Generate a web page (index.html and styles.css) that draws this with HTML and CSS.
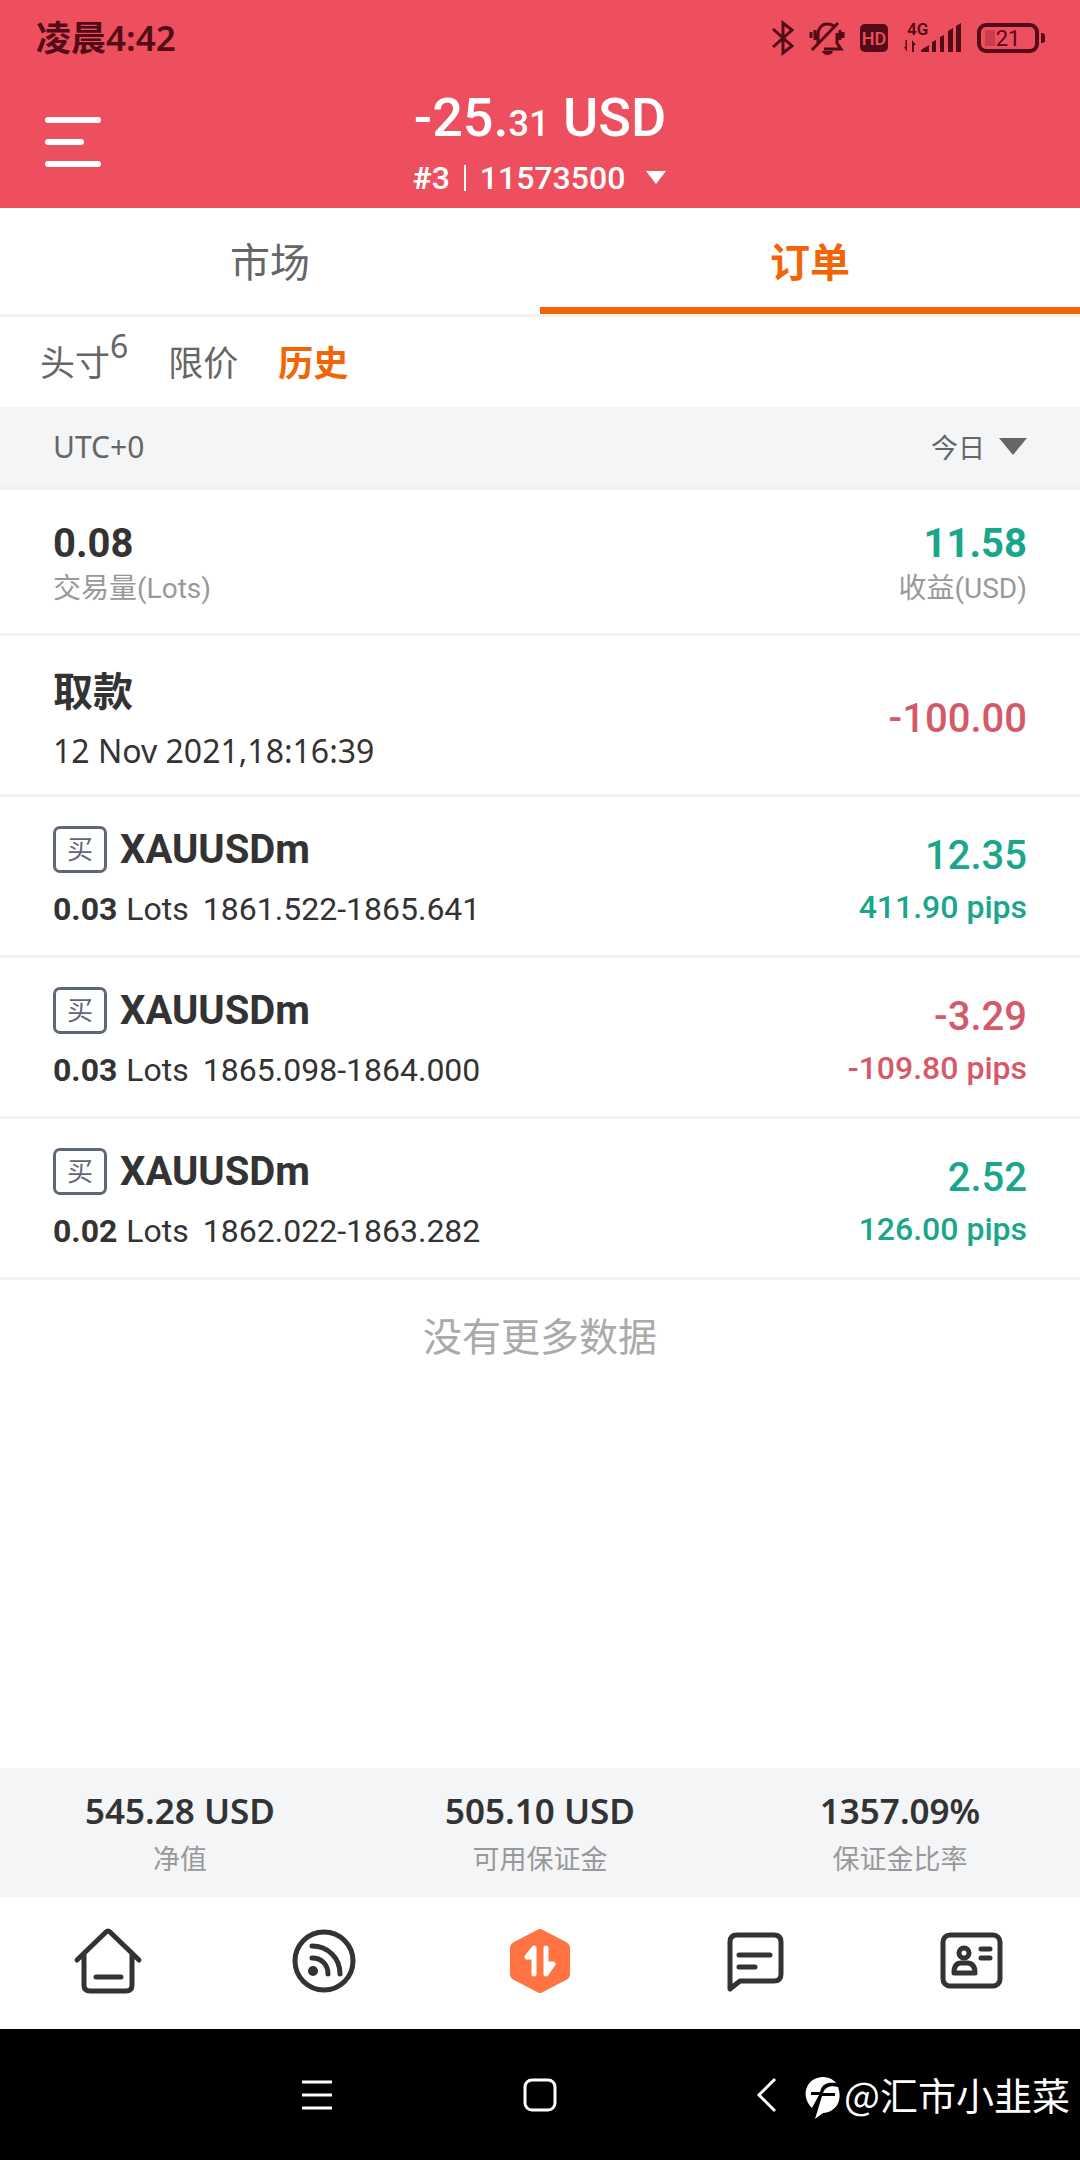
FILE: index.html
```html
<!DOCTYPE html>
<html lang="zh-CN">
<head>
<meta charset="utf-8">
<meta name="viewport" content="width=device-width, initial-scale=1">
<title>订单历史</title>
<link rel="stylesheet" href="styles.css">
</head>
<body>
<header class="header">
  <div class="status">
    <time class="status-time">凌晨4:42</time>
    <div class="status-icons">
      <svg class="bt" width="22" height="34" viewBox="0 0 22 34"><path d="M1 8 20 25 11 32V2l9 7L1 26"/></svg>
      <svg class="bell" width="34" height="34" viewBox="0 0 34 34"><path d="M8 23V14C8 7 12 3 17 3q4 0 7 2M27 12v10l4 6H14M1 11v6M5 9v10M30 9v10M33 11v6M2 29 28 2"/><path class="clapper" d="M12 30h11c-1 3-3 4-5.500 4s-4.500-1-5.500-4z"/></svg>
      <span class="hd">HD</span>
      <span class="net">
        <span class="net-type">4G</span>
        <svg width="57" height="32" viewBox="0 0 57 32"><path d="M3 18v12L0 25h1.500V18zM8 30V18l4 5h-2v7zM17 30v-2l8-5v7zM28 20l4-2v12h-4zM36 15l4-2v17h-4zM44 9l5-3v24h-5zM52 4l5-3v29h-5z"/></svg>
      </span>
      <span class="battery"><span class="battery-fill"></span><span class="battery-level">21</span></span>
    </div>
  </div>
  <div class="account">
    <button class="menu" aria-label="菜单"><svg width="56" height="52" viewBox="0 0 56 52"><path d="M3 4h50M3 26h33M3 48h50"/></svg></button>
    <button class="account-switch">
      <span class="balance">-25.<small>31</small> USD</span>
      <span class="account-id"><b>#</b>3<i></i>11573500<svg width="22" height="14" viewBox="0 0 22 14"><path d="M1 0h20L11 13z"/></svg></span>
    </button>
  </div>
</header>

<nav class="tabs">
  <button class="tab">市场</button>
  <button class="tab tab-active">订单</button>
</nav>
<nav class="subtabs">
  <button class="subtab">头寸<sup>6</sup></button>
  <button class="subtab">限价</button>
  <button class="subtab subtab-active">历史</button>
</nav>

<main class="history">
  <div class="filter">
    <span class="zone">UTC+0</span>
    <label class="period">
      <select aria-label="时间范围"><option>今日</option></select>
      <svg width="28" height="17" viewBox="0 0 28 17"><path d="M0 0h28L14 17z"/></svg>
    </label>
  </div>
  <div class="row totals">
    <div><strong>0.08</strong><span class="caption">交易量(Lots)</span></div>
    <div><strong class="up">11.58</strong><span class="caption">收益(USD)</span></div>
  </div>
  <ul class="orders">
    <li class="row">
      <div class="left transfer"><span class="name">取款</span><time class="date">12 Nov 2021,18:16:39</time></div>
      <div class="right down"><span class="amount">-100.00</span></div>
    </li>
    <li class="row">
      <div class="left"><span class="name"><span class="side">买</span>XAUUSDm</span><span class="detail"><b>0.03</b><span>Lots</span>1861.522-1865.641</span></div>
      <div class="right up"><span class="amount">12.35</span><span class="pips">411.90 pips</span></div>
    </li>
    <li class="row">
      <div class="left"><span class="name"><span class="side">买</span>XAUUSDm</span><span class="detail"><b>0.03</b><span>Lots</span>1865.098-1864.000</span></div>
      <div class="right down"><span class="amount">-3.29</span><span class="pips">-109.80 pips</span></div>
    </li>
    <li class="row">
      <div class="left"><span class="name"><span class="side">买</span>XAUUSDm</span><span class="detail"><b>0.02</b><span>Lots</span>1862.022-1863.282</span></div>
      <div class="right up"><span class="amount">2.52</span><span class="pips">126.00 pips</span></div>
    </li>
  </ul>
  <p class="end">没有更多数据</p>
</main>

<section class="summary">
  <div><strong>545.28 USD</strong><span>净值</span></div>
  <div><strong>505.10 USD</strong><span>可用保证金</span></div>
  <div><strong>1357.09%</strong><span>保证金比率</span></div>
</section>

<nav class="tabbar">
  <a href="#home" aria-label="首页"><svg width="68" height="68" viewBox="0 0 68 68"><path d="M3 33 32 5q2-2 4 0L65 33M10 27v31q0 6 6 6h36q6 0 6-6V27M22 50h25"/></svg></a>
  <a href="#feed" aria-label="资讯"><svg width="68" height="68" viewBox="0 0 68 68"><circle cx="34" cy="34" r="29"/><path d="M22 19c16 0 28 12 28 28M22 31c10 0 16 7 16 16"/><circle class="solid" cx="23" cy="44" r="5"/></svg></a>
  <a href="#trade" aria-label="交易"><svg width="68" height="68" viewBox="0 0 68 68"><path class="hex" d="M31 3q3-2 6 0l23 12q4 2 4 6v26q0 4-4 6L37 65q-3 2-6 0L8 53q-4-2-4-6V21q0-4 4-6z"/><path class="arrows" d="M28 47V21l-7 9h7M40 21v26l7-10h-7"/></svg></a>
  <a href="#chat" aria-label="消息"><svg width="68" height="68" viewBox="0 0 68 68"><path d="M8 62V15q0-7 7-7h37q7 0 7 7v32q0 7-7 7H18zM17 28h31M17 40h16"/></svg></a>
  <a href="#profile" aria-label="我的"><svg width="68" height="68" viewBox="0 0 68 68"><rect x="5" y="8" width="57" height="51" rx="7"/><circle cx="26" cy="26" r="5"/><path d="M16 46q0-10 7-10h6q8 0 8 10zM43 22h9M43 31h9"/></svg></a>
</nav>

<footer class="sysnav">
  <button aria-label="最近任务"><svg width="34" height="34" viewBox="0 0 34 34"><path d="M3 4h30M3 17h30M3 30h30"/></svg></button>
  <button aria-label="主屏幕"><svg width="34" height="34" viewBox="0 0 34 34"><rect x="2" y="2" width="30" height="30" rx="7"/></svg></button>
  <button aria-label="返回"><svg width="34" height="34" viewBox="0 0 34 34"><path d="M28 1 12 17l16 16"/></svg></button>
  <div class="watermark">
    <svg width="36" height="42" viewBox="0 0 36 42"><path d="M8 31C-4 19 2 1 18 0c6 0 11 2 14 6-9-1-14 1-16 9H7v3h8z"/><path d="M34 10c5 14-2 25-15 26l-8 6 7-23h13v-3H19c2-6 7-8 15-6z"/></svg>
    @汇市小韭菜
  </div>
</footer>
</body>
</html>
```

FILE: styles.css
```css
* { box-sizing: border-box; }

body {
  margin: 0;
  min-height: 100vh;
  display: flex;
  flex-direction: column;
  background: #fff;
  color: #333;
  font-family: Roboto, "Noto Sans CJK SC", sans-serif;
  font-size: 32px;
}

button, select {
  margin: 0;
  padding: 0;
  border: 0;
  background: none;
  color: inherit;
  font: inherit;
}

svg { display: block; overflow: visible; }

/* Header */
.header { height: 208px; background: #ed4f5f; color: #fff; }

.status {
  height: 76px;
  padding: 0 35px 0 36px;
  display: flex;
  align-items: center;
  justify-content: space-between;
  color: #530b17;
}
.status-time {
  font-family: "Noto Sans", "Noto Sans CJK SC", sans-serif;
  font-size: 35px;
  font-weight: 600;
  line-height: 74px;
}
.status-icons { display: flex; align-items: center; gap: 16px; }
.status-icons svg { fill: #530b17; }
.status-icons .bt,
.status-icons .bell { fill: none; stroke: #530b17; stroke-width: 3; }
.status-icons .clapper { fill: #530b17; stroke: none; }
.hd {
  width: 28px;
  height: 28px;
  border-radius: 5px;
  background: #530b17;
  color: #ed4f5f;
  font-size: 18px;
  font-weight: 500;
  line-height: 30px;
  text-align: center;
}
.net { position: relative; }
.net-type {
  position: absolute;
  left: 3px;
  top: -3px;
  font-size: 17px;
  font-weight: 600;
  line-height: 20px;
}
.battery {
  position: relative;
  width: 62px;
  height: 30px;
  margin-right: 6px;
  border: 4px solid #530b17;
  border-radius: 9px;
  font-size: 22px;
  line-height: 23px;
  text-align: center;
}
.battery::after {
  content: "";
  position: absolute;
  right: -10px;
  top: 6px;
  width: 4px;
  height: 10px;
  border-radius: 0 3px 3px 0;
  background: #530b17;
}
.battery-fill {
  position: absolute;
  left: 4px;
  top: 3px;
  width: 10px;
  height: 16px;
  background: #cd3c4d;
}
.battery-level { position: relative; }

.account {
  display: grid;
  grid-template-columns: 1fr auto 1fr;
  align-items: start;
  padding: 0 45px;
}
.menu { justify-self: start; height: 132px; }
.menu svg { stroke: #fff; stroke-width: 6; stroke-linecap: round; }
.account-switch {
  padding-top: 4px;
  display: flex;
  flex-direction: column;
  align-items: center;
}
.balance { font-size: 54px; font-weight: 500; line-height: 76px; }
.balance small { font-size: 36px; }
.account-id { display: flex; align-items: center; font-weight: 500; line-height: 32px; }
.account-id i { width: 2px; height: 26px; margin: 0 14px; background: #fff; }
.account-id svg { margin-left: 20px; fill: #fff; }

/* Tabs */
.tabs { display: flex; border-bottom: 3px solid #f2f2f2; }
.tab {
  flex: 1;
  height: 106px;
  padding-top: 5px;
  border-bottom: 7px solid transparent;
  color: #666;
  font-size: 40px;
}
.tab-active { border-color: #f26507; color: #f26507; font-weight: 600; }
.subtabs {
  height: 90px;
  padding: 0 40px 4px;
  display: flex;
  align-items: center;
  gap: 40px;
  color: #666;
  font-size: 35px;
}
.subtab sup {
  font-family: "Noto Sans", sans-serif;
  font-size: 32px;
  line-height: 0;
  vertical-align: 18px;
}
.subtab-active { color: #f26507; font-weight: 700; }

/* History */
.history { flex: 1; }
.filter {
  height: 83px;
  padding: 0 53px;
  display: flex;
  align-items: center;
  justify-content: space-between;
  border-bottom: 5px solid #f2f2f2;
  background: #f4f5f7;
  color: #666;
}
.zone { font-family: "Noto Sans", sans-serif; font-size: 30px; }
.period { display: flex; align-items: center; gap: 14px; }
.period select { appearance: none; font-family: "Noto Sans CJK SC", sans-serif; font-size: 27px; }
.period svg { fill: #666; }

.row {
  height: 161px;
  padding: 4px 53px 0;
  display: flex;
  align-items: center;
  justify-content: space-between;
  border-bottom: 3px solid #f2f2f2;
}
.row > div { display: flex; flex-direction: column; }
.totals { height: 146px; padding-top: 8px; }
.totals > div:last-child { align-items: flex-end; }
.totals strong { font-size: 40px; line-height: 46px; }
.up { color: #19a68a; }
.down { color: #d6596a; }
.caption { color: #999; font-size: 28px; line-height: 44px; }

.orders { margin: 0; padding: 0; list-style: none; }
.left { gap: 10px; }
.transfer { padding-top: 6px; }
.name {
  height: 52px;
  display: flex;
  align-items: center;
  gap: 13px;
  font-size: 40px;
  font-weight: 700;
}
.side {
  width: 54px;
  height: 47px;
  border: 3px solid #5d6778;
  border-radius: 7px;
  color: #5d6778;
  font-size: 26px;
  font-weight: 400;
  line-height: 42px;
  text-align: center;
}
.date { font-family: "Noto Sans", sans-serif; line-height: 52px; }
.detail { display: flex; line-height: 48px; }
.detail b { margin-right: 9px; }
.detail span { margin-right: 14px; }
.right { padding-top: 4px; align-items: flex-end; }
.amount { font-size: 40px; font-weight: 500; line-height: 54px; }
.pips { font-weight: 500; line-height: 48px; }
.end {
  margin: 0;
  color: #aaa;
  font-size: 39px;
  line-height: 116px;
  text-align: center;
}

/* Equity summary */
.summary {
  height: 129px;
  padding-top: 4px;
  display: grid;
  grid-template-columns: repeat(3, 1fr);
  align-items: center;
  background: #f4f5f7;
  text-align: center;
}
.summary div { display: flex; flex-direction: column; }
.summary strong { font-family: "Noto Sans", sans-serif; font-size: 35px; font-weight: 600; line-height: 50px; }
.summary span { color: #999; font-size: 27px; line-height: 48px; }

/* App tab bar */
.tabbar {
  height: 132px;
  padding-bottom: 4px;
  display: grid;
  grid-template-columns: repeat(5, 1fr);
  place-items: center;
}
.tabbar svg { fill: none; stroke: #333; stroke-width: 5; stroke-linecap: round; stroke-linejoin: round; }
.tabbar .solid { fill: #333; stroke: none; }
.tabbar .hex { fill: #ff7442; stroke: none; }
.tabbar .arrows { stroke: #fff; }

/* System navigation */
.sysnav {
  position: relative;
  height: 131px;
  display: flex;
  align-items: center;
  justify-content: center;
  gap: 190px;
  background: #000;
}
.sysnav button svg { fill: none; stroke: #fff; stroke-width: 3; }
.watermark {
  position: absolute;
  right: 10px;
  bottom: 38px;
  display: flex;
  align-items: center;
  gap: 4px;
  color: #fff;
  font-family: "Noto Sans CJK SC", sans-serif;
  font-size: 38px;
  line-height: 56px;
}
.watermark svg { margin-top: 8px; fill: #fff; }
```
